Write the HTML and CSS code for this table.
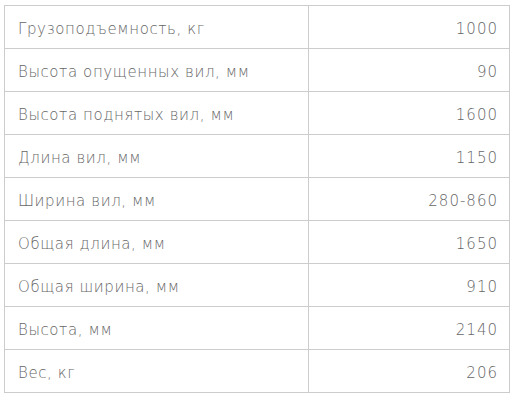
FILE: index.html
```html
<!DOCTYPE html>
<html lang="ru">
<head>
<meta charset="utf-8">
<link rel="stylesheet" href="styles.css">
</head>
<body>
<table class="specs">
  <tr><td class="name">Грузоподъемность, кг</td><td class="val">1000</td></tr>
  <tr><td class="name">Высота опущенных вил, мм</td><td class="val">90</td></tr>
  <tr><td class="name">Высота поднятых вил, мм</td><td class="val">1600</td></tr>
  <tr><td class="name">Длина вил, мм</td><td class="val">1150</td></tr>
  <tr><td class="name">Ширина вил, мм</td><td class="val">280-860</td></tr>
  <tr><td class="name">Общая длина, мм</td><td class="val">1650</td></tr>
  <tr><td class="name">Общая ширина, мм</td><td class="val">910</td></tr>
  <tr><td class="name">Высота, мм</td><td class="val">2140</td></tr>
  <tr><td class="name">Вес, кг</td><td class="val">206</td></tr>
</table>
</body>
</html>
```
FILE: styles.css
```css
html, body {
  margin: 0;
  padding: 0;
  background: #fff;
}
body {
  padding: 5px 0 0 4px;
}
.specs {
  border-collapse: collapse;
  width: 506px;
  font-family: "DejaVu Sans", "Liberation Sans", sans-serif;
  font-weight: 200;
  font-size: 15px;
  letter-spacing: 0.6px;
  color: #666;
}
.specs td {
  border: 1px solid #ccc;
  height: 43px;
  padding: 3px 12px 0 13px;
  box-sizing: border-box;
  vertical-align: middle;
}
.specs .name {
  width: 304px;
}
.specs .val {
  text-align: right;
  letter-spacing: 1px;
  padding-right: 11px;
}
```
